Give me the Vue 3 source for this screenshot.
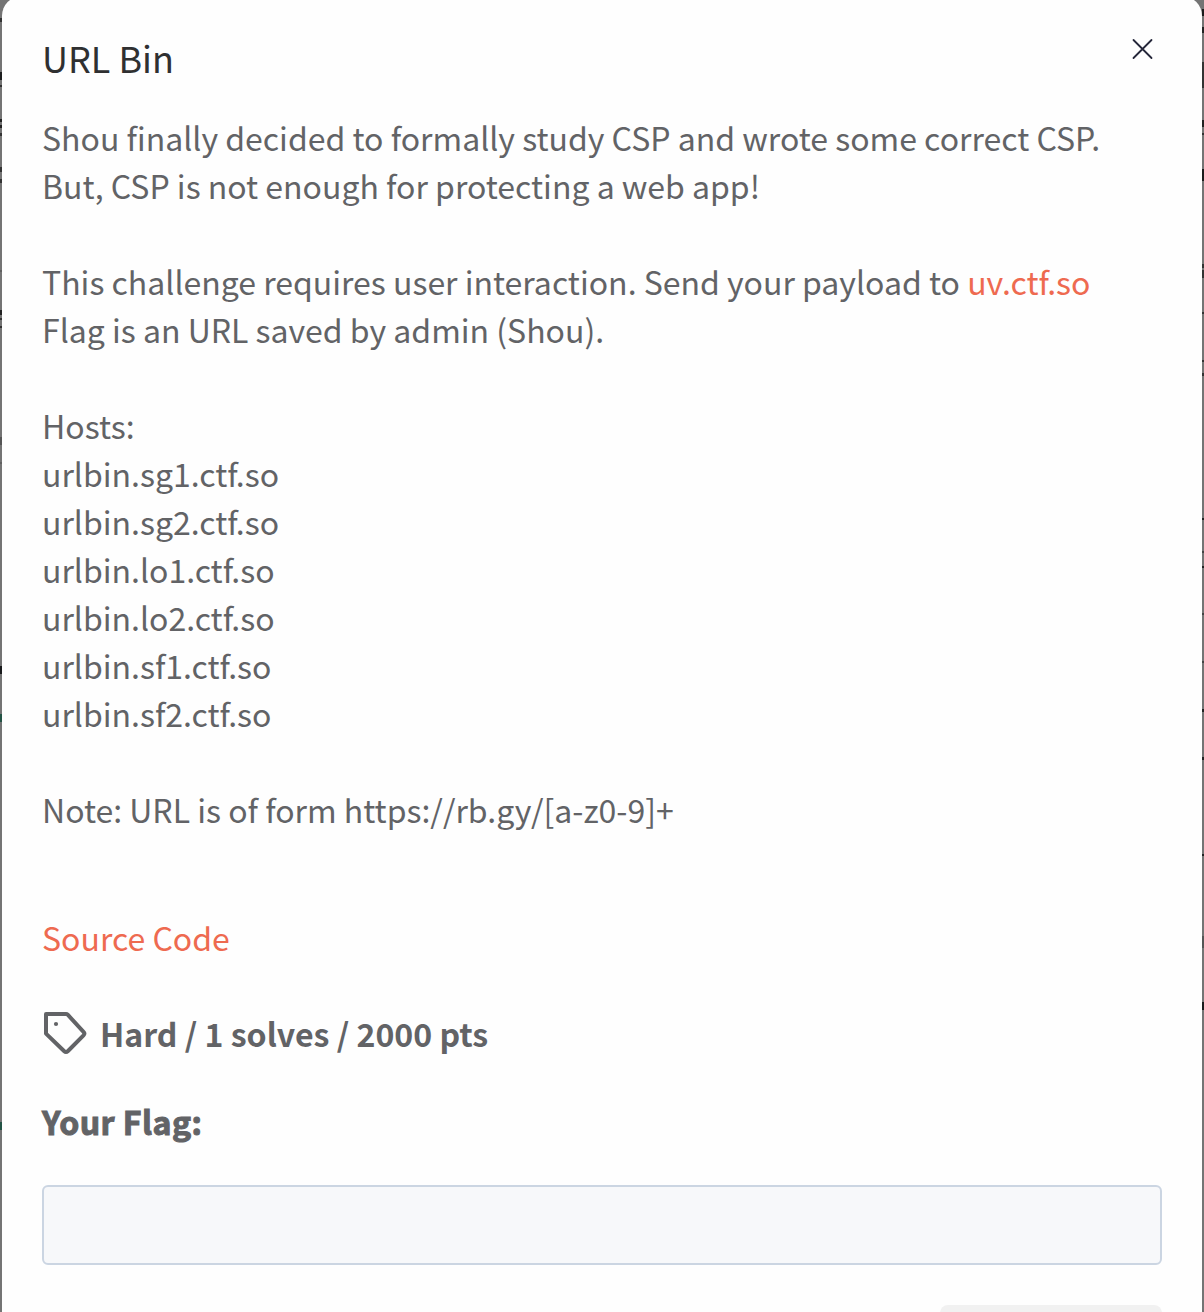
<script setup>
const description = [
  [{ text: 'Shou finally decided to formally study CSP and wrote some correct CSP.' }],
  [{ text: 'But, CSP is not enough for protecting a web app!' }],
  [],
  [{ text: 'This challenge requires user interaction. Send your payload to ' }, { text: 'uv.ctf.so', link: true }],
  [{ text: 'Flag is an URL saved by admin (Shou).' }],
  [],
  [{ text: 'Hosts:' }],
  [{ text: 'urlbin.sg1.ctf.so' }],
  [{ text: 'urlbin.sg2.ctf.so' }],
  [{ text: 'urlbin.lo1.ctf.so' }],
  [{ text: 'urlbin.lo2.ctf.so' }],
  [{ text: 'urlbin.sf1.ctf.so' }],
  [{ text: 'urlbin.sf2.ctf.so' }],
  [],
  [{ text: 'Note: URL is of form https://rb.gy/[a-z0-9]+' }],
]

// Slivers of the dimmed page visible on both sides of the dialog: [top, height, colour]
const leftMarks = [
  [18, 4, '#333'], [72, 8, '#1c1d1e'], [85, 2, '#333'], [119, 3, '#222'], [125, 3, '#222'],
  [133, 3, '#333'], [167, 5, '#333'], [179, 4, '#333'], [270, 2, '#606060'], [310, 5, '#222'],
  [318, 2, '#333'], [326, 2, '#333'], [437, 8, '#555'], [462, 2, '#606060'],
  [666, 8, '#18191b'], [714, 8, '#235345'], [1122, 8, '#235345'],
]
const rightMarks = [
  [9, 7, '#1c1c1c'], [27, 6, '#222'], [62, 26, '#333'], [120, 7, '#222'], [133, 2, '#333'],
  [169, 12, '#1c1c1c'], [264, 4, '#333'], [270, 8, '#333'], [312, 2, '#333'], [360, 2, '#333'],
  [373, 3, '#333'], [518, 2, '#222'], [551, 2, '#444'], [566, 2, '#222'], [613, 2, '#444'],
  [661, 2, '#444'], [709, 3, '#222'], [757, 3, '#222'], [854, 2, '#222'], [936, 12, '#555'],
  [1002, 8, '#1a1b1d'],
]
const markStyle = ([top, height, color]) => ({ top: top + 'px', height: height + 'px', background: color })
</script>

<template>
  <div class="backdrop">
    <i v-for="m in leftMarks" :key="'l' + m[0]" class="mark left" :style="markStyle(m)"></i>
    <i v-for="m in rightMarks" :key="'r' + m[0]" class="mark right" :style="markStyle(m)"></i>
    <section class="dialog">
      <header class="head">
        <h1>URL Bin</h1>
        <button class="close" aria-label="Close">
          <svg width="22" height="22" viewBox="0 0 22 22" fill="none" stroke="#25273a" stroke-width="1.8" stroke-linecap="round">
            <path d="M1.5 2 19.5 20M19.5 2 1.5 20" />
          </svg>
        </button>
      </header>
      <div class="description">
        <p v-for="(line, i) in description" :key="i">
          <template v-for="part in line" :key="part.text"><a v-if="part.link">{{ part.text }}</a><span v-else>{{ part.text }}</span></template>
        </p>
      </div>
      <p class="source"><a>Source Code</a></p>
      <div class="meta">
        <svg width="44" height="44" viewBox="0 0 44 44" fill="none" stroke="#626366" stroke-width="4" stroke-linejoin="round">
          <path d="M2 2H22Q23 2 23.7 2.7L39.5 19.8Q41.2 21.6 39.5 23.4L24 39Q22 40.8 20 39L2 21.6Z" />
          <circle cx="12" cy="12" r="2.1" fill="#626366" stroke="none" />
        </svg>
        <span>Hard / 1 solves / 2000 pts</span>
      </div>
      <label class="flag-label" for="flag">Your Flag:</label>
      <input id="flag" class="flag" type="text" />
      <div class="actions"><button class="submit" aria-label="Submit"></button></div>
    </section>
  </div>
</template>

<style>
html, body { margin: 0; overflow: hidden; }
</style>

<style scoped>
.backdrop {
  position: relative;
  box-sizing: border-box;
  height: 1312px;
  padding: 0 2px;
  overflow: hidden;
  background: #747474;
  font-family: "Noto Sans CJK SC", "Noto Sans", sans-serif;
  color: #626366;
}
.mark { position: absolute; width: 2px; }
.left { left: 0; }
.right { right: 0; }
.dialog {
  position: relative;
  box-sizing: border-box;
  width: 1200px;
  height: 1400px;
  margin-top: -4px;
  padding: 37px 40px 0;
  border-radius: 20px;
  background: #fefefe;
  display: flex;
  flex-direction: column;
}
.head {
  display: flex;
  justify-content: space-between;
  align-items: flex-start;
  height: 80px;
}
h1 { margin: 0; font-size: 36px; font-weight: 400; line-height: 48px; color: #2f3031; }
.close {
  display: flex;
  margin: 5px 8px 0 0;
  padding: 0;
  border: 0;
  background: none;
}
p { margin: 0; height: 48px; }
.description, .source, .meta { font-size: 32px; line-height: 48px; white-space: pre; }
a { color: #ee6a50; }
.source { margin-top: 80px; }
.meta {
  display: flex;
  align-items: center;
  gap: 12px;
  height: 48px;
  margin-top: 48px;
  padding-left: 2px;
  font-size: 32.1px;
  font-weight: 700;
}
.meta svg { flex: none; margin-top: 2px; }
.flag-label {
  margin-top: 40px;
  font-size: 32.1px;
  font-weight: 700;
  line-height: 48px;
  letter-spacing: 0.45px;
  -webkit-text-stroke: 1px #626366;
}
.flag {
  box-sizing: border-box;
  width: 1120px;
  height: 80px;
  margin: 40px 0 0;
  border: 2px solid #cbd5e2;
  border-radius: 6px;
  background: #f7f8fa;
}
.actions { display: flex; justify-content: flex-end; margin-top: 40px; }
.submit { width: 222px; height: 80px; border: 0; border-radius: 8px; background: #f1f1f1; }
</style>
